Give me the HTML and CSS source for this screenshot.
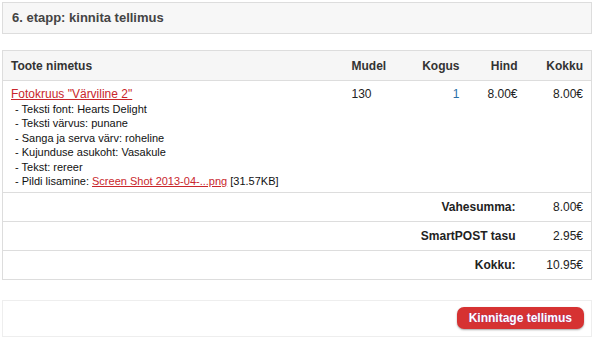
FILE: index.html
```html
<!DOCTYPE html>
<html>
<head>
  <title>Kinnita tellimus</title>
<link rel="stylesheet" href="styles.css"></head>
<body>

  <div class="step-title">6. etapp: kinnita tellimus</div>

  <table class="cart">
    <colgroup>
      <col class="col-name">
      <col class="col-model">
      <col class="col-qty">
      <col class="col-price">
      <col class="col-total">
    </colgroup>
    <thead>
      <tr>
        <th class="left">Toote nimetus</th>
        <th class="left">Mudel</th>
        <th>Kogus</th>
        <th>Hind</th>
        <th>Kokku</th>
      </tr>
    </thead>
    <tbody>
      <tr class="product">
        <td class="left">
          <a href="#" class="product-link">Fotokruus "Värviline 2"</a>
          <ul class="options">
            <li>- Teksti font: Hearts Delight</li>
            <li>- Teksti värvus: punane</li>
            <li>- Sanga ja serva värv: roheline</li>
            <li>- Kujunduse asukoht: Vasakule</li>
            <li>- Tekst: rereer</li>
            <li>- Pildi lisamine: <a href="#">Screen Shot 2013-04-...png</a> [31.57KB]</li>
          </ul>
        </td>
        <td class="left">130</td>
        <td class="qty">1</td>
        <td>8.00€</td>
        <td>8.00€</td>
      </tr>
      <tr class="sum">
        <td colspan="4" class="label">Vahesumma:</td>
        <td>8.00€</td>
      </tr>
      <tr class="sum">
        <td colspan="4" class="label">SmartPOST tasu</td>
        <td>2.95€</td>
      </tr>
      <tr class="sum">
        <td colspan="4" class="label">Kokku:</td>
        <td>10.95€</td>
      </tr>
    </tbody>
  </table>

  <div class="actions">
    <button class="confirm">Kinnitage tellimus</button>
  </div>

</body>
</html>
```

FILE: styles.css
```css
body {
  margin: 0;
  padding: 2px 3px 2px 2px;
  font-family: "Liberation Sans", Arial, sans-serif;
  font-size: 12px;
  color: #222;
  background-color: #fff;
}

.step-title {
  height: 30px;
  line-height: 30px;
  padding: 0 9px;
  background-color: #f7f7f7;
  border: 1px solid #ddd;
  font-size: 13px;
  font-weight: bold;
  color: #444;
}

.cart {
  width: 100%;
  margin-top: 16px;
  border-collapse: collapse;
  border: 1px solid #ddd;
}

.col-name { width: 341px; }
.col-model { width: 66px; }
.col-qty { width: 58px; }
.col-price { width: 58px; }

.cart th {
  height: 29px;
  padding: 0 8px;
  background-color: #f6f6f6;
  border-bottom: 1px solid #ddd;
  font-weight: bold;
  color: #333;
  text-align: right;
}

.cart td {
  padding: 0 8px;
  text-align: right;
  vertical-align: top;
}

.cart .left {
  text-align: left;
}

.product td {
  padding-top: 6px;
  padding-bottom: 4px;
  border-bottom: 1px solid #ddd;
  line-height: 14px;
}

.product-link {
  font-size: 12px;
  color: #c9262c;
}

.options {
  list-style: none;
  margin: 1px 0 0 0;
  padding: 0 0 0 4px;
  font-size: 11px;
  line-height: 14.4px;
  color: #111;
}

.options a {
  color: #c9262c;
}

.qty {
  color: #2a6ea6;
}

.sum td {
  height: 28px;
  vertical-align: middle;
  border-bottom: 1px solid #ddd;
}

.sum td.label {
  font-weight: bold;
  padding-right: 10px;
}

.actions {
  margin-top: 20px;
  padding: 6px 7px 7px;
  border: 1px solid #eee;
  text-align: right;
}

.confirm {
  height: 22px;
  padding: 0 12px;
  background-color: #d63232;
  color: #fff;
  border: none;
  border-radius: 7px;
  font-family: "Liberation Sans", Arial, sans-serif;
  font-size: 12px;
  font-weight: bold;
  text-shadow: 0 0 1px #8a2aa0;
  box-shadow: 0 1px 2px rgba(0, 0, 0, 0.35);
  cursor: pointer;
}
```
